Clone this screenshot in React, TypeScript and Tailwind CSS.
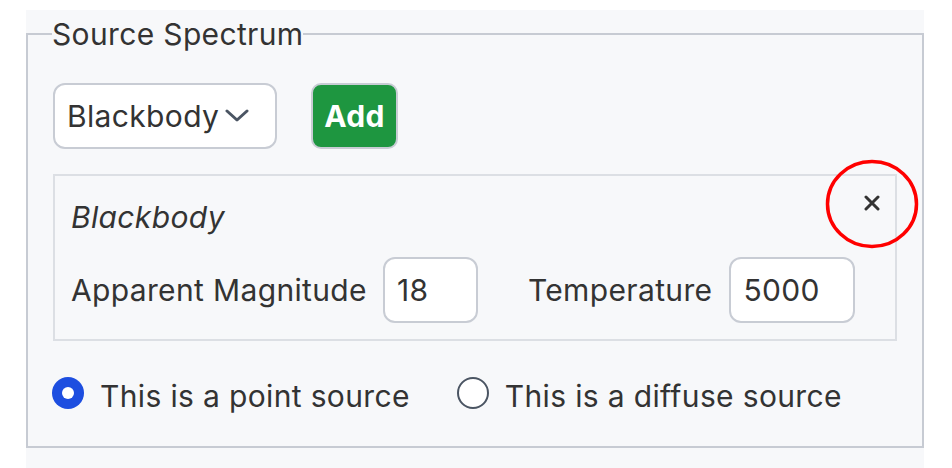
import { useState } from "react";

function Chevron() {
  return (
    <svg width="24" height="14" viewBox="0 0 24 14" className="ml-[6px]">
      <polyline points="2,2 12,11 22,2" fill="none" stroke="#4b5563" strokeWidth="3" strokeLinecap="round" strokeLinejoin="round" />
    </svg>
  );
}

function Radio({ checked, label, onClick }: { checked: boolean; label: string; onClick: () => void }) {
  return (
    <label className="flex items-center gap-[16px] cursor-pointer" onClick={onClick}>
      {checked ? (
        <span className="w-[32px] h-[32px] rounded-full bg-[#1d4ee0] flex items-center justify-center">
          <span className="w-[12px] h-[12px] rounded-full bg-white" />
        </span>
      ) : (
        <span className="w-[32px] h-[32px] rounded-full border-2 border-[#4b5563] bg-white" />
      )}
      <span className="pt-[6px]">{label}</span>
    </label>
  );
}

export default function App() {
  const [point, setPoint] = useState(true);

  return (
    <div className="min-h-screen bg-white pt-[10px] pl-[26px] text-[30px] tracking-[0.35px] text-[#333333] font-['Inter',sans-serif]">
      <div className="w-[898px] h-[458px] bg-[#f7f8fa]">
        <fieldset className="border-2 border-[#c7cbd3] px-[25px] pb-[29px] m-0">
          <legend className="px-0 ml-[-1px] mr-[2px] leading-[48px]">Source Spectrum</legend>

          <div className="flex items-center gap-[34px] mt-[25px]">
            <div className="w-[224px] h-[66px] rounded-[12px] border-2 border-[#c8ccd4] bg-white flex items-center pl-[12px]">
              <span>Blackbody</span>
              <Chevron />
            </div>
            <button className="w-[87px] h-[66px] rounded-[10px] border-2 border-[#c8ccd4] bg-[#1e9640] text-white font-bold">
              Add
            </button>
          </div>

          <div className="relative mt-[25px] border-2 border-[#dcdfe4] px-[16px] pt-[16px] pb-[16px]">
            <div className="h-[50px] flex items-center italic">Blackbody</div>
            <button className="absolute top-[15px] right-[11px] w-[24px] h-[24px] flex items-center justify-center">
              <svg width="16" height="16" viewBox="0 0 16 16">
                <path d="M2 2 L14 14 M14 2 L2 14" stroke="#333333" strokeWidth="3" strokeLinecap="round" />
              </svg>
            </button>
            <svg className="absolute top-[-17px] right-[-24px] pointer-events-none" width="94" height="90" viewBox="0 0 94 90">
              <ellipse cx="47" cy="45" rx="44.5" ry="42.5" fill="none" stroke="#ff0000" strokeWidth="3.5" />
            </svg>
            <div className="flex items-center mt-[15px]">
              <span>Apparent Magnitude</span>
              <div className="ml-[16px] w-[95px] h-[66px] rounded-[12px] border-2 border-[#c8ccd4] bg-white flex items-center pl-[12px]">18</div>
              <span className="ml-[50px]">Temperature</span>
              <div className="ml-[17px] w-[126px] h-[66px] rounded-[12px] border-2 border-[#c8ccd4] bg-white flex items-center pl-[12px]">5000</div>
            </div>
          </div>

          <div className="flex items-center h-[48px] mt-[28px] gap-[47px] ml-[-1px]">
            <Radio checked={point} label="This is a point source" onClick={() => setPoint(true)} />
            <Radio checked={!point} label="This is a diffuse source" onClick={() => setPoint(false)} />
          </div>
        </fieldset>
      </div>
    </div>
  );
}
